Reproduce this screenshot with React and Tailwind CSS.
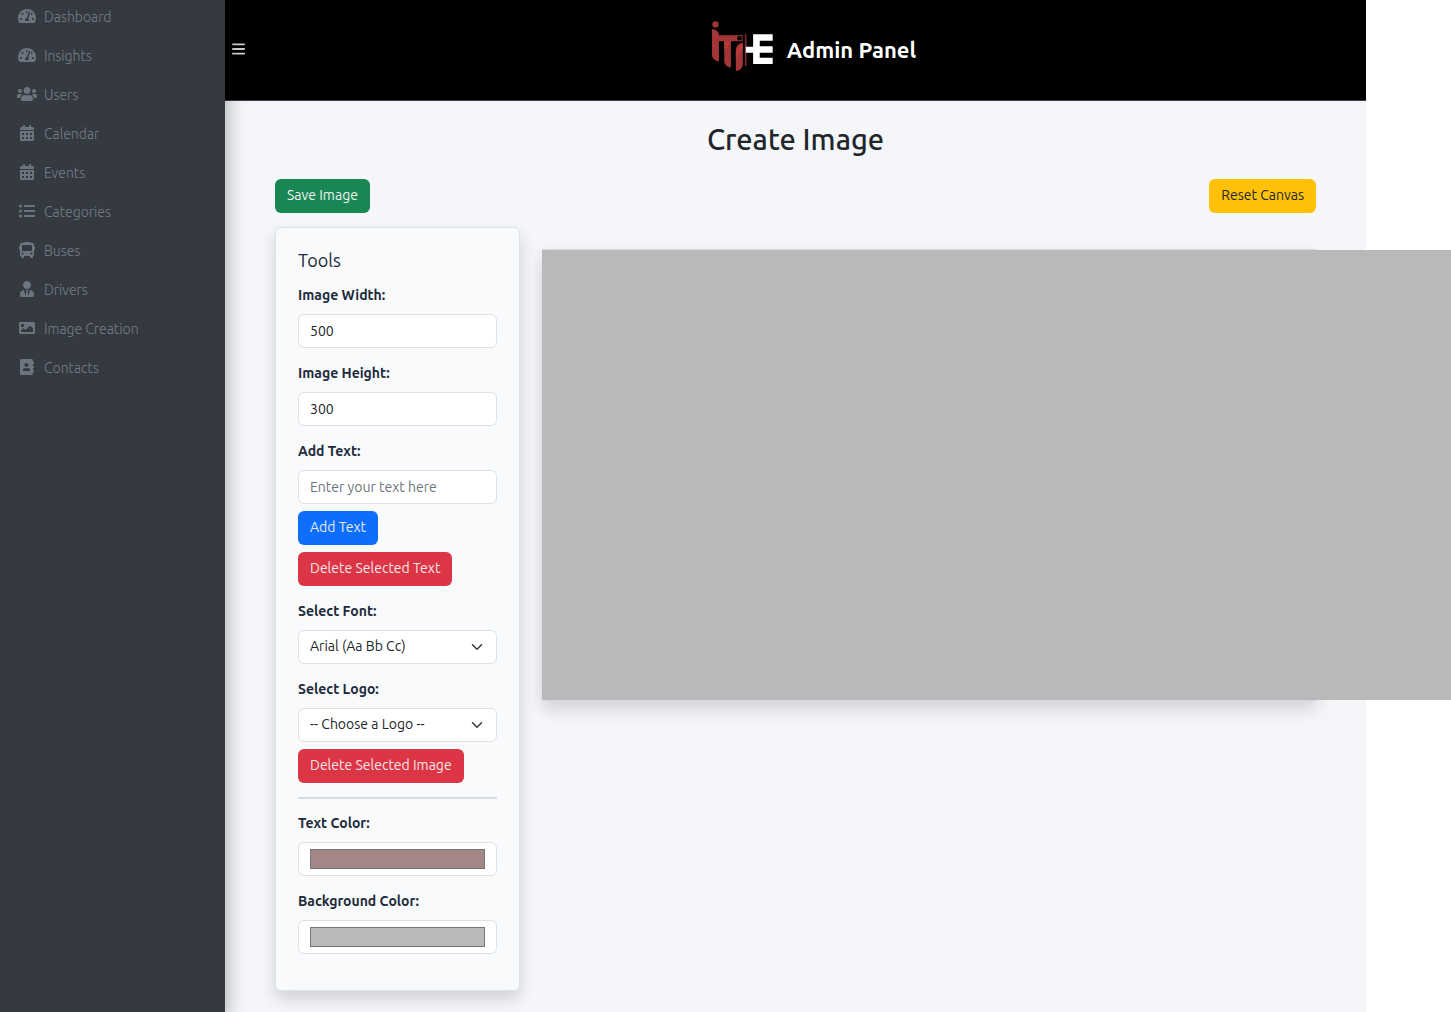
import React, { useState } from "react";
import {
  FaTachometerAlt,
  FaUsers,
  FaCalendarAlt,
  FaListUl,
  FaBus,
  FaUserTie,
  FaImage,
  FaAddressBook,
} from "react-icons/fa";
import { FaBars } from "react-icons/fa6";

const navItems = [
  { label: "Dashboard", Icon: FaTachometerAlt },
  { label: "Insights", Icon: FaTachometerAlt },
  { label: "Users", Icon: FaUsers },
  { label: "Calendar", Icon: FaCalendarAlt },
  { label: "Events", Icon: FaCalendarAlt },
  { label: "Categories", Icon: FaListUl },
  { label: "Buses", Icon: FaBus },
  { label: "Drivers", Icon: FaUserTie },
  { label: "Image Creation", Icon: FaImage },
  { label: "Contacts", Icon: FaAddressBook },
];

const control =
  "block h-[34px] w-full rounded-md border border-[#dee2e6] bg-white px-[11px] text-sm text-[#212529] placeholder:text-[#6c757d]";
const button = "block h-[34px] rounded-md px-3 pb-0.5 text-sm whitespace-nowrap";

function Sidebar() {
  return (
    <nav className="relative z-10 w-[225px] shrink-0 bg-[#353941] pt-[5px] shadow-[0_8px_20px_rgba(0,0,0,0.35)]">
      <ul className="flex flex-col gap-4">
        {navItems.map(({ label, Icon }) => (
          <li key={label}>
            <a href="#" className="flex h-[23px] items-center gap-[7px] pl-[17px] text-sm font-light text-[#757f88]">
              <span className="flex w-5 justify-center pb-px text-[#6c757d]">
                <Icon className="h-4 w-5" aria-hidden="true" />
              </span>
              {label}
            </a>
          </li>
        ))}
      </ul>
    </nav>
  );
}

function Logo() {
  return (
    <svg viewBox="66 30 190 158" className="h-[53px] w-[63px]" role="img" aria-label="ITI-E">
      <g fill="#a23535">
        <circle cx="79.500" cy="42.500" r="9.500" />
        <path d="M69 56c12 1 21 8 21 20v78c-12-1-21-9-21-21z" />
        <path d="M90 74h71v19h-35v79c-12-1-20-8-20-20V93H90z" />
        <path d="M162 98v63c0 13-9 21-21 22v-63c0-13 9-21 21-22z" />
      </g>
      <path d="M106 93h20l-20 28zM141 120l21-22v20l-21 30z" fill="#b63b38" />
      <path d="M90 74h71v4H90z" fill="#7c2b2c" />
      <circle cx="152" cy="84" r="7" fill="#000" />
      <path d="M168 72h5v96h-5z" fill="#7c2b2c" />
      <path d="M193 72h59v20h-39v16h39v20h-39v15h39v19h-59v-34h-22v-18h22z" fill="#fff" />
    </svg>
  );
}

function Header() {
  return (
    <header className="flex h-[101px] items-center border-b border-[#373b4d] bg-black text-white">
      <button type="button" aria-label="Toggle menu" className="ml-[7px] text-[#d0d2d4]">
        <FaBars className="mb-0.5 h-4 w-[13px]" />
      </button>
      <div className="flex flex-1 items-center justify-center gap-[13px] pb-2 pl-4">
        <Logo />
        <span className="pt-2 text-[22px] leading-7 font-semibold">Admin Panel</span>
      </div>
    </header>
  );
}

function Field({ id, label, children }) {
  return (
    <div className="mb-3.5">
      <label htmlFor={id} className="mb-2 block text-sm leading-[22px] font-semibold text-[#212b3a]">
        {label}
      </label>
      {children}
    </div>
  );
}

function Select({ id, children }) {
  return (
    <div className="relative">
      <select id={id} className={`${control} appearance-none pr-8 pb-0.5`}>
        {children}
      </select>
      <svg
        viewBox="0 0 16 16"
        className="pointer-events-none absolute top-[11px] right-3.5 h-3 w-3"
        fill="none"
        stroke="#343a40"
        strokeWidth="2"
        strokeLinecap="round"
        strokeLinejoin="round"
        aria-hidden="true"
      >
        <path d="m2 5 6 6 6-6" />
      </svg>
    </div>
  );
}

function ColorInput({ id, value, onChange }) {
  return (
    <input
      id={id}
      type="color"
      value={value}
      onChange={(e) => onChange(e.target.value)}
      className="block h-[34px] w-full cursor-pointer appearance-none rounded-md border border-[#dee2e6] bg-white px-[11px] py-1.5 [&::-webkit-color-swatch]:border [&::-webkit-color-swatch]:border-[#777777] [&::-webkit-color-swatch-wrapper]:p-0"
    />
  );
}

function Tools({ textColor, setTextColor, background, setBackground }) {
  return (
    <section className="w-[245px] shrink-0 rounded-md border border-[#dee2e6] bg-[#f8fafc] px-[22px] pt-[21px] pb-[22px] shadow-[0_8px_16px_rgba(0,0,0,0.15)]">
      <h2 className="mb-[13px] text-lg leading-[22px] text-[#212b3a]">Tools</h2>
      <Field id="image-width" label="Image Width:">
        <input id="image-width" className={control} defaultValue="500" />
      </Field>
      <Field id="image-height" label="Image Height:">
        <input id="image-height" className={control} defaultValue="300" />
      </Field>
      <Field id="add-text" label="Add Text:">
        <input id="add-text" className={control} placeholder="Enter your text here" />
        <button type="button" className={`${button} mt-[7px] bg-[#0d6efd] text-[#e7eaf0]`}>
          Add Text
        </button>
        <button type="button" className={`${button} mt-[7px] bg-[#dc3545] text-[#f4e7ea]`}>
          Delete Selected Text
        </button>
      </Field>
      <Field id="font" label="Select Font:">
        <Select id="font">
          <option>Arial (Aa Bb Cc)</option>
        </Select>
      </Field>
      <Field id="logo" label="Select Logo:">
        <Select id="logo">
          <option>-- Choose a Logo --</option>
        </Select>
        <button type="button" className={`${button} mt-[7px] bg-[#dc3545] text-[#f4e7ea]`}>
          Delete Selected Image
        </button>
      </Field>
      <hr className="mb-[13px] border-t-2 border-[#d9dce0]" />
      <Field id="text-color" label="Text Color:">
        <ColorInput id="text-color" value={textColor} onChange={setTextColor} />
      </Field>
      <Field id="background-color" label="Background Color:">
        <ColorInput id="background-color" value={background} onChange={setBackground} />
      </Field>
    </section>
  );
}

export default function App() {
  const [textColor, setTextColor] = useState("#a38686");
  const [background, setBackground] = useState("#b9b9b9");

  return (
    <div className="flex min-h-screen overflow-hidden bg-white pr-[85px] font-['Ubuntu','Noto_Sans',sans-serif]">
      <Sidebar />
      <div className="min-w-0 flex-1 bg-[#f4f6fa]">
        <Header />
        <main className="px-[50px] pt-5 pb-[21px]">
          <h1 className="text-center text-[29px] leading-9 font-medium text-[#212529]">Create Image</h1>
          <div className="mt-[22px] flex justify-between">
            <button type="button" className={`${button} bg-[#198754] text-[#eef4f0]`}>
              Save Image
            </button>
            <button type="button" className={`${button} bg-[#ffc107] text-[#212529]`}>
              Reset Canvas
            </button>
          </div>
          <div className="mt-3.5 flex items-start gap-[22px]">
            <Tools
              textColor={textColor}
              setTextColor={setTextColor}
              background={background}
              setBackground={setBackground}
            />
            <div className="mt-[22px] min-w-0 flex-1 border-y border-[#d5d8dc] shadow-[0_8px_16px_rgba(0,0,0,0.15)]">
              <canvas className="block h-[450px] w-[1000px] max-w-none" style={{ backgroundColor: background }} />
            </div>
          </div>
        </main>
      </div>
    </div>
  );
}
